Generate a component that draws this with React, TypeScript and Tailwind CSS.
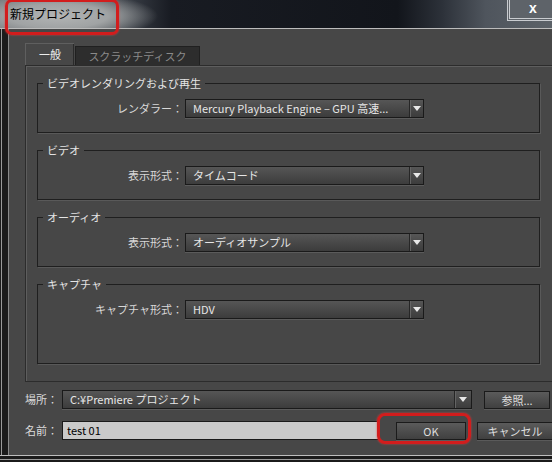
import * as React from 'react';

const FONT = { fontFamily: '"Noto Sans CJK JP", "Noto Sans", sans-serif' };

const Arrow = () => (
  <svg width="8" height="5" viewBox="0 0 8 5">
    <path d="M0 0 H8 L4 5 Z" fill="#e8e8e8" />
  </svg>
);

const Select = ({ value, width, arrow }: { value: string; width: string; arrow: string }) => (
  <div
    className={`flex h-[19px] border border-[#1a1a1a] bg-gradient-to-b from-[#565656] to-[#3c3c3c] shadow-[0_1px_0_#5b5b5b] ${width}`}
  >
    <div className="flex-1 truncate pl-[7px] text-[11px] leading-[17px] text-[#e6e6e6]">{value}</div>
    <div
      className={`flex items-center justify-center border-l border-[#262626] shadow-[inset_1px_0_0_#646464] ${arrow}`}
    >
      <Arrow />
    </div>
  </div>
);

const Group = ({ title, label, value, tall }: { title: string; label: string; value: string; tall?: boolean }) => (
  <fieldset
    className={`ml-[11px] w-[503px] border border-[#1f1f1f] pt-[9px] shadow-[1px_1px_0_#595959] ${tall ? 'pb-[44px]' : 'pb-[14px]'}`}
  >
    <legend className="ml-[5px] px-[4px] text-[11px] leading-[14px] text-[#e4e4e4]">{title}</legend>
    <div className="flex items-center">
      <div className="w-[145px] text-right text-[11px] leading-[17px] text-[#d8d8d8]">{label}</div>
      <div className="ml-[2px]">
        <Select value={value} width="w-[239px]" arrow="w-[14px]" />
      </div>
    </div>
  </fieldset>
);

const Btn = ({ children, className }: { children: React.ReactNode; className: string }) => (
  <div
    className={`flex h-[18px] items-center justify-center border border-[#1b1b1b] bg-gradient-to-b from-[#5b5b5b] to-[#404040] text-[11px] leading-[16px] text-[#dedede] shadow-[0_1px_0_#5a5a5a] ${className}`}
  >
    {children}
  </div>
);

export default function App() {
  return (
    <div className="relative flex h-[462px] w-[552px] flex-col overflow-hidden bg-[#1a1a1a]" style={FONT}>
      {/* title bar */}
      <div className="flex h-[29px] shrink-0 border-b border-[#bcbcbc] bg-[radial-gradient(ellipse_100px_24px_at_58px_16px,#b2b4b4_0%,#a0a3a4_50%,rgba(120,124,128,0)_100%),linear-gradient(to_right,#6e7276_0%,#6a6e72_14%,#353a42_24%,#181b22_31%,#12151b_72%,#2c3139_80%,#4f555d_88%,#5c6268_100%)]">
        <div className="pl-[10px] pt-[6px] text-[12px] leading-[16px] text-black">新規プロジェクト</div>
        <div
          className="ml-auto h-[21px] w-[45px] border-b-[3px] border-l-[3px] border-double border-[#c9ccd0] bg-[#5e6369] pl-[19px] text-[14px] font-bold leading-[17px] text-white"
          style={{ fontFamily: '"Liberation Sans", sans-serif' }}
        >
          x
        </div>
      </div>

      <div className="flex h-[426px] shrink-0">
        {/* left frame */}
        <div className="w-[9px] shrink-0 bg-[#1b1b1b] shadow-[inset_1px_0_0_#1b1b1b,inset_2px_0_0_#9a9a9a,inset_-1px_0_0_#8a8a8a]" />

        <div className="flex flex-1 flex-col bg-[#474747] pl-[16px] pr-[4px] pt-[14px]">
          {/* tabs */}
          <div className="flex h-[22px] items-end">
            <div className="flex h-[22px] w-[49px] items-center justify-center border-l border-t border-[#5f5f5f] bg-[#474747] text-[11px] text-[#ececec] shadow-[inset_-1px_0_0_#2a2a2a]">
              一般
            </div>
            <div className="ml-[1px] flex h-[19px] w-[125px] items-center justify-center border border-b-0 border-[#202020] bg-[#2d2d2d] text-[11px] text-[#8a8a8a]">
              スクラッチディスク
            </div>
          </div>

          {/* tab panel */}
          <div className="flex h-[317px] flex-col gap-[10px] border border-[#2c2c2c] pt-[10px] shadow-[inset_1px_1px_0_#5e5e5e]">
            <Group title="ビデオレンダリングおよび再生" label="レンダラー：" value="Mercury Playback Engine – GPU 高速..." />
            <Group title="ビデオ" label="表示形式：" value="タイムコード" />
            <Group title="オーディオ" label="表示形式：" value="オーディオサンプル" />
            <Group title="キャプチャ" label="キャプチャ形式：" value="HDV" tall />
          </div>

          {/* location */}
          <div className="mt-[8px] flex items-center">
            <div className="w-[37px] text-[11px] leading-[17px] text-[#dcdcdc]">場所：</div>
            <Select value="C:¥Premiere プロジェクト" width="w-[410px]" arrow="w-[17px]" />
            <Btn className="ml-[12px] w-[66px]">参照...</Btn>
          </div>

          {/* name */}
          <div className="mt-[12px] flex items-center">
            <div className="w-[37px] text-[11px] leading-[17px] text-[#dcdcdc]">名前：</div>
            <div className="h-[19px] w-[317px] border border-[#1a1a1a] bg-[#cacaca] pl-[4px] text-[11px] leading-[17px] text-black">
              test 01
            </div>
            <Btn className="ml-[17px] w-[70px]">OK</Btn>
            <Btn className="ml-[11px] w-[76px] shrink-0">キャンセル</Btn>
          </div>
        </div>
      </div>

      {/* bottom frame */}
      <div className="h-[7px] shrink-0 border-t border-[#bdbdbd] bg-[#1b1b1b] shadow-[inset_0_-2px_0_#1b1b1b,inset_0_-3px_0_#9c9c9c]" />

      {/* red highlights */}
      <div className="pointer-events-none absolute left-[5px] top-[-1px] h-[36px] w-[114px] rounded-[7px] border-[3px] border-[#d21d1d] shadow-[0_0_2px_#e04040]" />
      <div className="pointer-events-none absolute left-[377px] top-[413px] h-[31px] w-[94px] rounded-[8px] border-[3px] border-[#d21d1d] shadow-[0_0_2px_#e04040]" />
    </div>
  );
}
